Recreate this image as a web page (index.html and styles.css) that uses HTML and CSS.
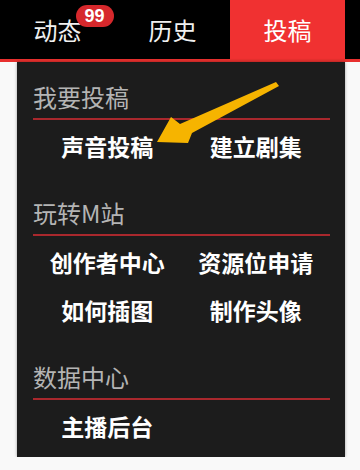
FILE: index.html
```html
<!DOCTYPE html>
<html lang="zh-CN">
<head>
    <meta charset="UTF-8">
    <meta name="viewport" content="width=device-width, initial-scale=1.0">
    <title>投稿</title>
    <link rel="stylesheet" href="styles.css">
</head>
<body>
    <!-- 顶部导航 -->
    <div class="topbar">
        <div class="tab">
            <span class="tab-label">动态<span class="badge">99</span></span>
        </div>
        <div class="tab">
            <span class="tab-label">历史</span>
        </div>
        <div class="tab active">
            <span class="tab-label">投稿</span>
        </div>
    </div>

    <!-- 下拉菜单 -->
    <div class="dropdown">
        <div class="section">
            <h3>我要投稿</h3>
            <div class="items">
                <a>声音投稿</a>
                <a>建立剧集</a>
            </div>
        </div>
        <div class="section">
            <h3>玩转M站</h3>
            <div class="items">
                <a>创作者中心</a>
                <a>资源位申请</a>
                <a>如何插图</a>
                <a>制作头像</a>
            </div>
        </div>
        <div class="section">
            <h3>数据中心</h3>
            <div class="items">
                <a>主播后台</a>
            </div>
        </div>

        <!-- 指向箭头 -->
        <svg class="arrow" width="360" height="470" viewBox="0 0 360 470">
            <polygon points="157,142 171,117 180,124 276,82 279,86 192,133 188,143" fill="#f6b400"/>
        </svg>
    </div>
</body>
</html>
```

FILE: styles.css
```css
body {
    margin: 0;
    background-color: #f9f9f9;
    font-family: "Noto Sans CJK SC", "Liberation Sans", sans-serif;
}

.topbar {
    display: flex;
    height: 59px;
    background-color: #000;
    border-bottom: 3px solid #e8302e;
}

.tab {
    width: 115px;
    display: flex;
    align-items: center;
    justify-content: center;
    color: #f0f0f0;
    font-size: 24px;
}

.tab.active {
    background-color: #f03131;
    color: #fff;
}

.tab-label {
    position: relative;
    line-height: 30px;
}

.badge {
    position: absolute;
    left: 42px;
    top: -10px;
    width: 38px;
    height: 22px;
    border-radius: 11px;
    background-color: #d6282c;
    color: #fff;
    font-family: "Liberation Sans", Arial, sans-serif;
    font-size: 18px;
    font-weight: bold;
    line-height: 22px;
    text-align: center;
}

.dropdown {
    position: relative;
    width: 328px;
    margin-left: 17px;
    padding: 20px 15px 7px 16px;
    box-sizing: border-box;
    background-color: #1c1c1c;
    box-shadow: 0 0 3px rgba(0, 0, 0, 0.35);
}

.section + .section {
    margin-top: 28px;
}

h3 {
    margin: 0;
    padding-bottom: 6px;
    font-size: 24px;
    font-weight: normal;
    line-height: 30px;
    color: #b4b4b4;
    border-bottom: 2px solid #a9282d;
}

.items {
    display: grid;
    grid-template-columns: 1fr 1fr;
    margin-top: 2px;
}

.items a {
    display: block;
    height: 48px;
    line-height: 48px;
    text-align: center;
    color: #fff;
    font-size: 23px;
    font-weight: 600;
}

.arrow {
    position: absolute;
    left: -17px;
    top: -62px;
    pointer-events: none;
}
```
